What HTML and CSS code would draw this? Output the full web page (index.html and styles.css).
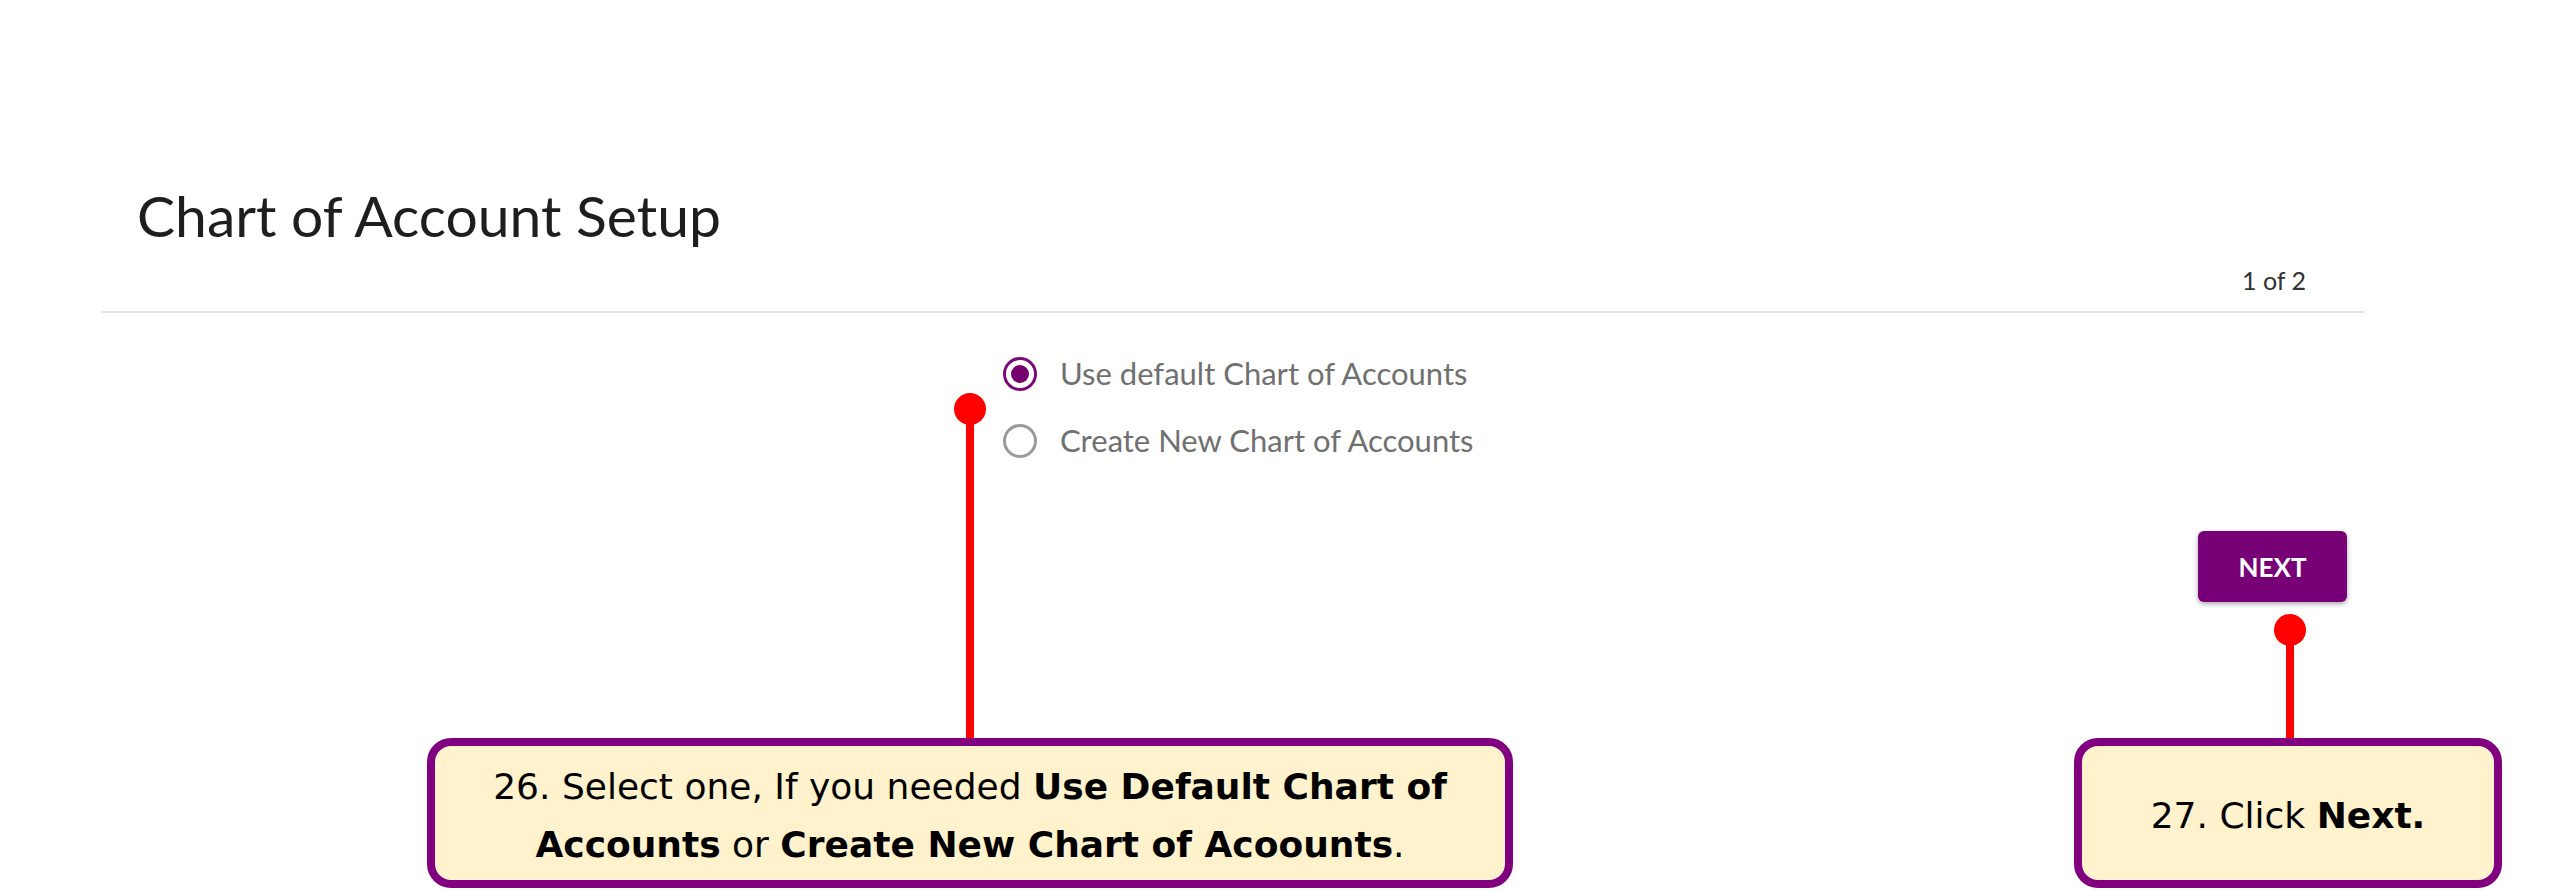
FILE: index.html
```html
<!DOCTYPE html>
<html lang="en">
<head>
<meta charset="utf-8">
<title>Chart of Account Setup</title>
<link rel="stylesheet" href="styles.css">
</head>
<body>
<div class="page">
  <header class="header">
    <h1 class="title">Chart of Account Setup</h1>
    <div class="pager">1 of 2</div>
  </header>

  <div class="radio-list">
    <label class="radio-row">
      <span class="radio checked"><span class="radio-dot"></span></span>
      <span class="radio-label">Use default Chart of Accounts</span>
    </label>
    <label class="radio-row">
      <span class="radio"></span>
      <span class="radio-label">Create New Chart of Accounts</span>
    </label>
  </div>

  <div class="actions">
    <button class="btn-next" type="button">NEXT</button>
  </div>

  <div class="pin pin-one"><span class="pin-dot"></span><span class="pin-stem"></span></div>
  <div class="pin pin-two"><span class="pin-dot"></span><span class="pin-stem"></span></div>

  <div class="callout callout-one">
    <p class="callout-text">26. Select one, If you needed <b>Use Default Chart of</b><br><b>Accounts</b> or <b>Create New Chart of Acoounts</b>.</p>
  </div>
  <div class="callout callout-two">
    <p class="callout-text">27. Click <b>Next.</b></p>
  </div>
</div>
</body>
</html>
```

FILE: styles.css
```css
* { box-sizing: border-box; }

html, body {
  margin: 0;
  padding: 0;
  background: #ffffff;
}

.page {
  position: relative;
  width: 2556px;
  height: 892px;
  overflow: hidden;
  background: #ffffff;
  font-family: Lato, "Open Sans", sans-serif;
}

.header {
  margin-left: 101px;
  width: 2263px;
  padding-top: 181px;
  padding-bottom: 16px;
  border-bottom: 2px solid #e1e1e1;
}

.title {
  margin: 0;
  padding-left: 36px;
  font-size: 57px;
  line-height: 68px;
  font-weight: 400;
  color: #1e1e1e;
}

.pager {
  margin-top: 16px;
  padding-right: 58px;
  text-align: right;
  font-size: 25px;
  line-height: 30px;
  color: #333333;
}

.radio-list {
  display: flex;
  flex-direction: column;
  margin-left: 1003px;
  padding-top: 27px;
}

.radio-row {
  display: flex;
  align-items: center;
  gap: 23px;
  height: 67px;
}

.radio {
  display: flex;
  align-items: center;
  justify-content: center;
  width: 34px;
  height: 34px;
  border-radius: 50%;
  border: 3px solid #9a9a9a;
}

.radio.checked {
  border-color: #7a0a78;
}

.radio-dot {
  width: 18px;
  height: 18px;
  border-radius: 50%;
  background: #77006f;
}

.radio-label {
  font-size: 31px;
  line-height: 67px;
  color: #707070;
}

.actions {
  display: flex;
  justify-content: flex-end;
  padding-right: 209px;
  margin-top: 57px;
}

.btn-next {
  width: 149px;
  height: 71px;
  border: none;
  border-radius: 6px;
  background: #770077;
  color: #ffffff;
  font-family: Lato, "Open Sans", sans-serif;
  font-weight: 700;
  font-size: 26px;
  box-shadow: 0 2px 5px rgba(0, 0, 0, 0.35);
}

/* annotation overlay */
.pin {
  position: absolute;
  display: flex;
  flex-direction: column;
  align-items: center;
  width: 32px;
}

.pin-dot {
  width: 32px;
  height: 32px;
  border-radius: 50%;
  background: #ff0000;
}

.pin-stem {
  width: 8px;
  margin-top: -16px;
  background: #ff0000;
  flex: 1;
}

.pin-one {
  left: 954px;
  top: 393px;
  height: 349px;
}

.pin-two {
  left: 2274px;
  top: 614px;
  height: 128px;
}

.callout {
  position: absolute;
  top: 738px;
  height: 150px;
  display: flex;
  align-items: center;
  justify-content: center;
  padding-top: 5px;
  border: 8px solid #800080;
  border-radius: 24px;
  background: #fff2cc;
}

.callout-one {
  left: 427px;
  width: 1086px;
}

.callout-two {
  left: 2074px;
  width: 428px;
}

.callout-text {
  margin: 0;
  font-family: "DejaVu Sans", Verdana, sans-serif;
  font-size: 36px;
  line-height: 58px;
  color: #000000;
  text-align: center;
}
```
